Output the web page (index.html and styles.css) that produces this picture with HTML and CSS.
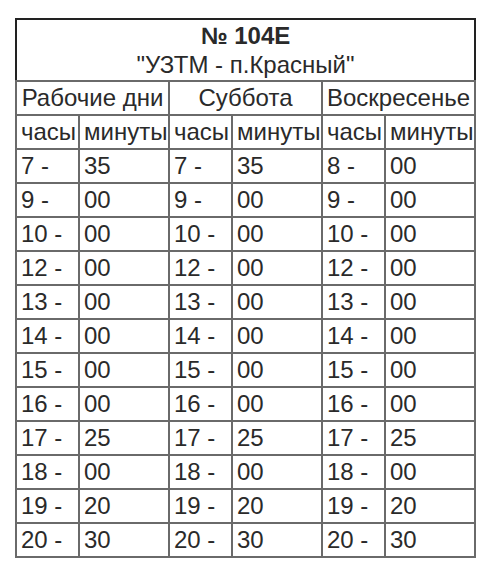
FILE: index.html
```html
<!DOCTYPE html>
<html lang="ru">
<head>
<meta charset="utf-8">
<link rel="stylesheet" href="styles.css">
</head>
<body>
<div class="page">
<table class="timetable">
  <colgroup>
    <col class="c-h"><col class="c-m"><col class="c-h"><col class="c-m"><col class="c-h"><col class="c-m">
  </colgroup>
  <tr class="title-row">
    <td colspan="6" class="title">
      <div class="num">№ 104Е</div>
      <div class="route">"УЗТМ - п.Красный"</div>
    </td>
  </tr>
  <tr class="row">
    <td colspan="2" class="group">Рабочие дни</td>
    <td colspan="2" class="group">Суббота</td>
    <td colspan="2" class="group">Воскресенье</td>
  </tr>
  <tr class="row">
    <td>часы</td><td>минуты</td><td>часы</td><td>минуты</td><td>часы</td><td>минуты</td>
  </tr>
  <tr class="row"><td>7 -</td><td>35</td><td>7 -</td><td>35</td><td>8 -</td><td>00</td></tr>
  <tr class="row"><td>9 -</td><td>00</td><td>9 -</td><td>00</td><td>9 -</td><td>00</td></tr>
  <tr class="row"><td>10 -</td><td>00</td><td>10 -</td><td>00</td><td>10 -</td><td>00</td></tr>
  <tr class="row"><td>12 -</td><td>00</td><td>12 -</td><td>00</td><td>12 -</td><td>00</td></tr>
  <tr class="row"><td>13 -</td><td>00</td><td>13 -</td><td>00</td><td>13 -</td><td>00</td></tr>
  <tr class="row"><td>14 -</td><td>00</td><td>14 -</td><td>00</td><td>14 -</td><td>00</td></tr>
  <tr class="row"><td>15 -</td><td>00</td><td>15 -</td><td>00</td><td>15 -</td><td>00</td></tr>
  <tr class="row"><td>16 -</td><td>00</td><td>16 -</td><td>00</td><td>16 -</td><td>00</td></tr>
  <tr class="row"><td>17 -</td><td>25</td><td>17 -</td><td>25</td><td>17 -</td><td>25</td></tr>
  <tr class="row"><td>18 -</td><td>00</td><td>18 -</td><td>00</td><td>18 -</td><td>00</td></tr>
  <tr class="row"><td>19 -</td><td>20</td><td>19 -</td><td>20</td><td>19 -</td><td>20</td></tr>
  <tr class="row"><td>20 -</td><td>30</td><td>20 -</td><td>30</td><td>20 -</td><td>30</td></tr>
</table>
</div>
</body>
</html>
```
FILE: styles.css
```css
html, body {
  margin: 0;
  padding: 0;
  background: #ffffff;
}
.page {
  padding: 18px 0 0 15px;
}
.timetable {
  border-collapse: collapse;
  table-layout: fixed;
  width: 459px;
  border: 2px solid #222222;
  font-family: "Liberation Sans", Arial, sans-serif;
  font-size: 24px;
  color: #2a2a2a;
}
.c-h { width: 63px; }
.c-m { width: 90px; }
.timetable td {
  border: 2px solid #6a6a6a;
  padding: 0 0 0 4px;
  white-space: nowrap;
  overflow: hidden;
  line-height: 26px;
}
.title-row { height: 62px; }
.row { height: 34px; }
.timetable td.title {
  text-align: center;
  padding: 0;
  line-height: 29px;
  border-color: #222222 #222222 #6a6a6a #222222;
}
.num { font-weight: bold; }
.timetable td.group {
  text-align: center;
  padding: 0;
}
```
